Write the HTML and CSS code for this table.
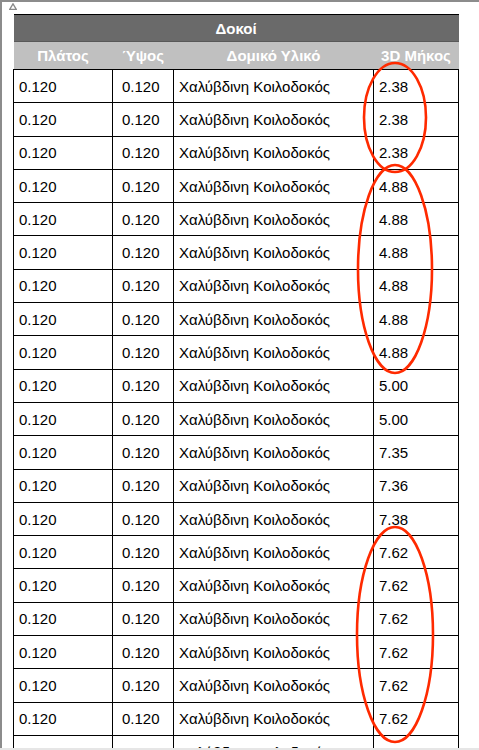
FILE: index.html
```html
<!DOCTYPE html>
<html lang="el">
<head>
<meta charset="utf-8">
<title>Δοκοί</title>
<link rel="stylesheet" href="styles.css">
</head>
<body>
<div class="frame">
  <div class="marker"><svg width="8" height="7" viewBox="0 0 8 7"><path d="M4 0.8 L7.3 6.3 L0.7 6.3 Z" fill="none" stroke="#8a8a8a" stroke-width="1.3"/></svg></div>
  <table class="beams">
    <colgroup><col class="c1"><col class="c2"><col class="c3"><col class="c4"></colgroup>
    <thead>
      <tr class="title"><th colspan="4">Δοκοί</th></tr>
      <tr class="head"><th>Πλάτος</th><th>Ύψος</th><th>Δομικό Υλικό</th><th>3D Μήκος</th></tr>
    </thead>
    <tbody>
      <tr><td>0.120</td><td class="h">0.120</td><td>Χαλύβδινη Κοιλοδοκός</td><td>2.38</td></tr>
      <tr><td>0.120</td><td class="h">0.120</td><td>Χαλύβδινη Κοιλοδοκός</td><td>2.38</td></tr>
      <tr><td>0.120</td><td class="h">0.120</td><td>Χαλύβδινη Κοιλοδοκός</td><td>2.38</td></tr>
      <tr><td>0.120</td><td class="h">0.120</td><td>Χαλύβδινη Κοιλοδοκός</td><td>4.88</td></tr>
      <tr><td>0.120</td><td class="h">0.120</td><td>Χαλύβδινη Κοιλοδοκός</td><td>4.88</td></tr>
      <tr><td>0.120</td><td class="h">0.120</td><td>Χαλύβδινη Κοιλοδοκός</td><td>4.88</td></tr>
      <tr><td>0.120</td><td class="h">0.120</td><td>Χαλύβδινη Κοιλοδοκός</td><td>4.88</td></tr>
      <tr><td>0.120</td><td class="h">0.120</td><td>Χαλύβδινη Κοιλοδοκός</td><td>4.88</td></tr>
      <tr><td>0.120</td><td class="h">0.120</td><td>Χαλύβδινη Κοιλοδοκός</td><td>4.88</td></tr>
      <tr><td>0.120</td><td class="h">0.120</td><td>Χαλύβδινη Κοιλοδοκός</td><td>5.00</td></tr>
      <tr><td>0.120</td><td class="h">0.120</td><td>Χαλύβδινη Κοιλοδοκός</td><td>5.00</td></tr>
      <tr><td>0.120</td><td class="h">0.120</td><td>Χαλύβδινη Κοιλοδοκός</td><td>7.35</td></tr>
      <tr><td>0.120</td><td class="h">0.120</td><td>Χαλύβδινη Κοιλοδοκός</td><td>7.36</td></tr>
      <tr><td>0.120</td><td class="h">0.120</td><td>Χαλύβδινη Κοιλοδοκός</td><td>7.38</td></tr>
      <tr><td>0.120</td><td class="h">0.120</td><td>Χαλύβδινη Κοιλοδοκός</td><td>7.62</td></tr>
      <tr><td>0.120</td><td class="h">0.120</td><td>Χαλύβδινη Κοιλοδοκός</td><td>7.62</td></tr>
      <tr><td>0.120</td><td class="h">0.120</td><td>Χαλύβδινη Κοιλοδοκός</td><td>7.62</td></tr>
      <tr><td>0.120</td><td class="h">0.120</td><td>Χαλύβδινη Κοιλοδοκός</td><td>7.62</td></tr>
      <tr><td>0.120</td><td class="h">0.120</td><td>Χαλύβδινη Κοιλοδοκός</td><td>7.62</td></tr>
      <tr><td>0.120</td><td class="h">0.120</td><td>Χαλύβδινη Κοιλοδοκός</td><td>7.62</td></tr>
      <tr><td>0.120</td><td class="h">0.120</td><td>Χαλύβδινη Κοιλοδοκός</td><td>8.00</td></tr>
      <tr><td>0.120</td><td class="h">0.120</td><td>Χαλύβδινη Κοιλοδοκός</td><td>8.00</td></tr>
    </tbody>
  </table>
  <svg class="marks" width="479" height="750" viewBox="0 0 479 750">
    <ellipse cx="395" cy="117.5" rx="31" ry="54.5"/>
    <ellipse cx="395" cy="269" rx="37" ry="104"/>
    <ellipse cx="395" cy="634.5" rx="38" ry="107.5"/>
  </svg>
</div>
<div class="bottombar"></div>
</body>
</html>
```
FILE: styles.css
```css
html, body {
  margin: 0;
  padding: 0;
  background: #ffffff;
  overflow: hidden;
}
body {
  width: 479px;
  height: 750px;
  font-family: "Liberation Sans", Arial, sans-serif;
}
.frame {
  position: relative;
  box-sizing: border-box;
  height: 748px;
  border-top: 2px solid #8c8c8c;
  border-left: 2px solid #8c8c8c;
  overflow: hidden;
}
.bottombar {
  height: 2px;
  background: #e6e6e6;
}
.marker {
  height: 11px;
  padding-left: 7px;
  line-height: 0;
}
.marker svg {
  display: block;
  margin-top: 1px;
}
.beams {
  margin-left: 11px;
  border-collapse: collapse;
  table-layout: fixed;
  width: 445px;
  font-size: 15px;
  color: #000;
}
.c1 { width: 99px; }
.c2 { width: 61px; }
.c3 { width: 200px; }
.c4 { width: 85px; }
.title th {
  background: #6a6a6a;
  color: #fff;
  font-weight: bold;
  height: 26px;
  padding: 0;
  border-top: 1px solid #000;
  border-bottom: 1px solid #585858;
  text-align: center;
}
.head th {
  background: #c0c0c0;
  color: #fff;
  font-weight: bold;
  height: 27px;
  padding: 0;
  text-align: center;
}
tbody td {
  border: 1px solid #000;
  height: 33.3px;
  padding: 0 0 0 5px;
  white-space: nowrap;
  overflow: hidden;
  box-sizing: border-box;
}
tbody td.h {
  padding-left: 9px;
}
.marks {
  position: absolute;
  left: -2px;
  top: -2px;
  pointer-events: none;
}
.marks ellipse {
  fill: none;
  stroke: #ff2a00;
  stroke-width: 2.6;
}
```
